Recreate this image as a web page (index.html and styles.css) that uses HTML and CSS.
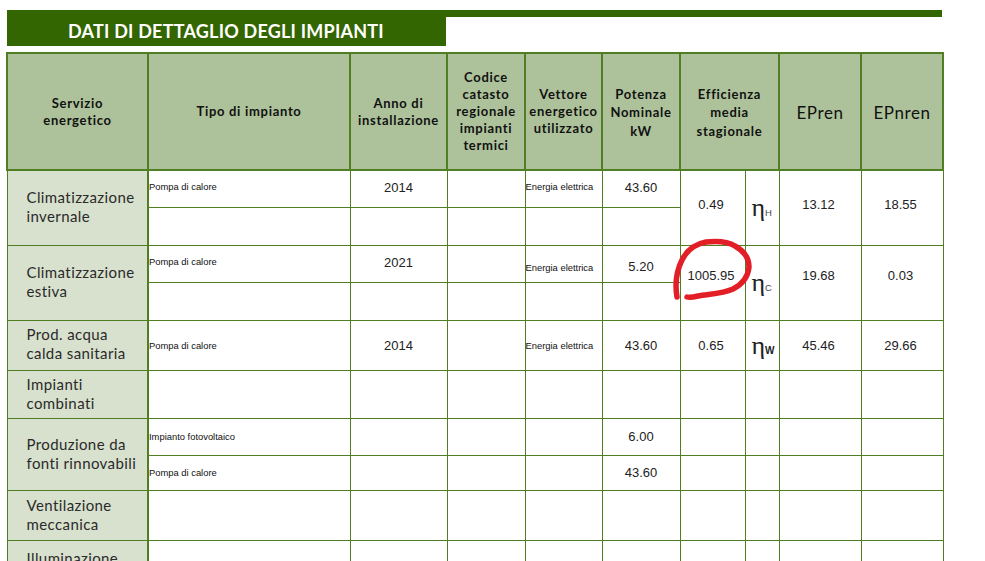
FILE: index.html
```html
<!DOCTYPE html>
<html lang="it">
<head>
<meta charset="utf-8">
<title>Dati di dettaglio degli impianti</title>
<link rel="stylesheet" href="styles.css">
</head>
<body>
<main class="page">
  <header class="banner">
    <div class="stripe"></div>
    <h1 class="title">DATI DI DETTAGLIO DEGLI IMPIANTI</h1>
  </header>
  <table class="grid">
    <colgroup>
      <col class="c1"><col class="c2"><col class="c3"><col class="c4"><col class="c5"><col class="c6"><col class="c7"><col class="c8"><col class="c9"><col class="c10">
    </colgroup>
    <thead>
      <tr class="h-head">
        <th>Servizio<br>energetico</th>
        <th>Tipo di impianto</th>
        <th>Anno di<br>installazione</th>
        <th>Codice<br>catasto<br>regionale<br>impianti<br>termici</th>
        <th>Vettore<br>energetico<br>utilizzato</th>
        <th class="tall">Potenza<br>Nominale<br>kW</th>
        <th class="tall" colspan="2">Efficienza<br>media<br>stagionale</th>
        <th class="ep">EPren</th>
        <th class="ep">EPnren</th>
      </tr>
    </thead>
    <tbody>
      <tr class="h-37">
        <td class="svc svc-up" rowspan="2">Climatizzazione<br>invernale</td>
        <td class="small top">Pompa di calore</td>
        <td class="num top">2014</td>
        <td></td>
        <td class="small top">Energia elettrica</td>
        <td class="num top">43.60</td>
        <td class="num raised" rowspan="2">0.49</td>
        <td class="sym" rowspan="2"><span class="eta">η</span><span class="sub">H</span></td>
        <td class="num raised" rowspan="2">13.12</td>
        <td class="num raised" rowspan="2">18.55</td>
      </tr>
      <tr class="h-38"><td></td><td></td><td></td><td></td><td></td></tr>
      <tr class="h-37">
        <td class="svc svc-up" rowspan="2">Climatizzazione<br>estiva</td>
        <td class="small top">Pompa di calore</td>
        <td class="num top">2021</td>
        <td></td>
        <td class="small low">Energia elettrica</td>
        <td class="num low-num">5.20</td>
        <td class="num raised-more" rowspan="2">1005.95</td>
        <td class="sym" rowspan="2"><span class="eta">η</span><span class="sub">C</span></td>
        <td class="num raised-more" rowspan="2">19.68</td>
        <td class="num raised-more" rowspan="2">0.03</td>
      </tr>
      <tr class="h-38"><td></td><td></td><td></td><td></td><td></td></tr>
      <tr class="h-50 nudge">
        <td class="svc svc-up">Prod. acqua<br>calda sanitaria</td>
        <td class="small">Pompa di calore</td>
        <td class="num">2014</td>
        <td></td>
        <td class="small">Energia elettrica</td>
        <td class="num">43.60</td>
        <td class="num shift">0.65</td>
        <td class="sym sym-w"><span class="eta">η</span><span class="sub sub-bold">W</span></td>
        <td class="num shift">45.46</td>
        <td class="num shift">29.66</td>
      </tr>
      <tr class="h-48">
        <td class="svc">Impianti<br>combinati</td>
        <td></td><td></td><td></td><td></td><td></td><td></td><td></td><td></td><td></td>
      </tr>
      <tr class="h-37">
        <td class="svc" rowspan="2">Produzione da<br>fonti rinnovabili</td>
        <td class="small">Impianto fotovoltaico</td>
        <td></td><td></td><td></td>
        <td class="num">6.00</td>
        <td></td><td></td><td></td><td></td>
      </tr>
      <tr class="h-35">
        <td class="small">Pompa di calore</td>
        <td></td><td></td><td></td>
        <td class="num">43.60</td>
        <td></td><td></td><td></td><td></td>
      </tr>
      <tr class="h-50">
        <td class="svc">Ventilazione<br>meccanica</td>
        <td></td><td></td><td></td><td></td><td></td><td></td><td></td><td></td><td></td>
      </tr>
      <tr class="h-50">
        <td class="svc svc-top">Illuminazione</td>
        <td></td><td></td><td></td><td></td><td></td><td></td><td></td><td></td><td></td>
      </tr>
    </tbody>
  </table>
  <svg class="ink" width="985" height="561" viewBox="0 0 985 561" aria-hidden="true">
    <path d="M677 297 C675 285 676 272 682 260 C687 250 695 244 706 242 C716 241 727 241 735 246 C744 251 749 258 749 267 C748 277 743 284 733 289 C722 294 708 294 698 296 C694 297 690 298 687 297"/>
  </svg>
</main>
</body>
</html>
```

FILE: styles.css
```css
html, body {
  margin: 0;
  height: 561px;
  overflow: hidden;
  background: #fff;
}

.page {
  position: relative;
  height: 561px;
  padding: 10px 0 0 7px;
  box-sizing: border-box;
  font-family: "Liberation Sans", Arial, sans-serif;
  color: #222;
}

.banner {
  width: 935px;
  height: 36px;
  margin-bottom: 6px;
}

.stripe {
  height: 7px;
  background: #336600;
}

.title {
  width: 439px;
  height: 29px;
  margin: 0;
  padding-left: 61px;
  box-sizing: border-box;
  background: #336600;
  color: #fff;
  font: 700 18px/28px Lato, sans-serif;
  letter-spacing: 0.22px;
  white-space: nowrap;
}

.grid {
  width: 936px;
  margin-left: -1px;
  table-layout: fixed;
  border-collapse: collapse;
}

.c1 { width: 141px; }
.c2 { width: 202px; }
.c3 { width: 97px; }
.c4 { width: 78px; }
.c5 { width: 77px; }
.c6 { width: 78px; }
.c7 { width: 65px; }
.c8 { width: 34px; }
.c9 { width: 82px; }
.c10 { width: 82px; }

.grid th,
.grid td {
  padding: 0;
  border: 1px solid #4f7f22;
  overflow: hidden;
  white-space: nowrap;
}

.grid th {
  background: #adc29a;
  color: #111;
  font: 700 13px/17px Lato, sans-serif;
  letter-spacing: 0.7px;
  text-align: center;
  border-width: 2px;
}

.grid th.tall {
  padding-top: 2px;
  line-height: 18.5px;
}

.grid th.ep {
  padding-top: 2px;
  font: 400 17px/20px Lato, sans-serif;
  letter-spacing: 0.6px;
}

.h-head { height: 117px; }
.h-35 { height: 35px; }
.h-37 { height: 37px; }
.h-38 { height: 38px; }
.h-48 { height: 48px; }
.h-50 { height: 50px; }

.grid td.svc {
  padding-left: 19px;
  background: #d8e1ce;
  border-right-width: 2px;
  font: 400 15px/19px Lato, sans-serif;
  letter-spacing: 0.4px;
  color: #2a2a2a;
}

.grid td.svc-up { padding-bottom: 2px; }

.grid td.svc-top {
  vertical-align: top;
  padding-top: 8px;
}

.grid td.small {
  font-size: 9.4px;
  line-height: 12px;
  color: #111;
}

.grid td.num {
  font-size: 13px;
  text-align: center;
}

.grid td.top {
  vertical-align: top;
  padding-top: 10px;
}

.grid td.num.top { padding-top: 9px; }

.grid td.low { padding-top: 8px; }

.grid td.low-num { padding-top: 5px; }

.grid td.raised {
  padding-right: 3px;
  padding-bottom: 6px;
}

.grid td.raised-more {
  padding-right: 3px;
  padding-bottom: 14px;
}

.grid .nudge td:not(.svc) { padding-top: 2px; }

.grid .nudge td.num { padding-top: 0; }

.grid .nudge td.shift { padding-right: 3px; }

.grid td.sym {
  padding: 6px 0 0 6px;
  line-height: 24px;
}

.grid .nudge td.sym-w { padding-top: 6px; }

.eta {
  font: 400 26px/24px "Liberation Serif", serif;
}

.sub {
  font-size: 9.5px;
  color: #444;
}

.sub-bold {
  font-size: 10px;
  font-weight: 700;
  color: #222;
}

.ink {
  position: absolute;
  left: 0;
  top: 0;
  fill: none;
  stroke: #e21f26;
  stroke-width: 5.5;
  stroke-linecap: round;
  stroke-linejoin: round;
  pointer-events: none;
}
```
